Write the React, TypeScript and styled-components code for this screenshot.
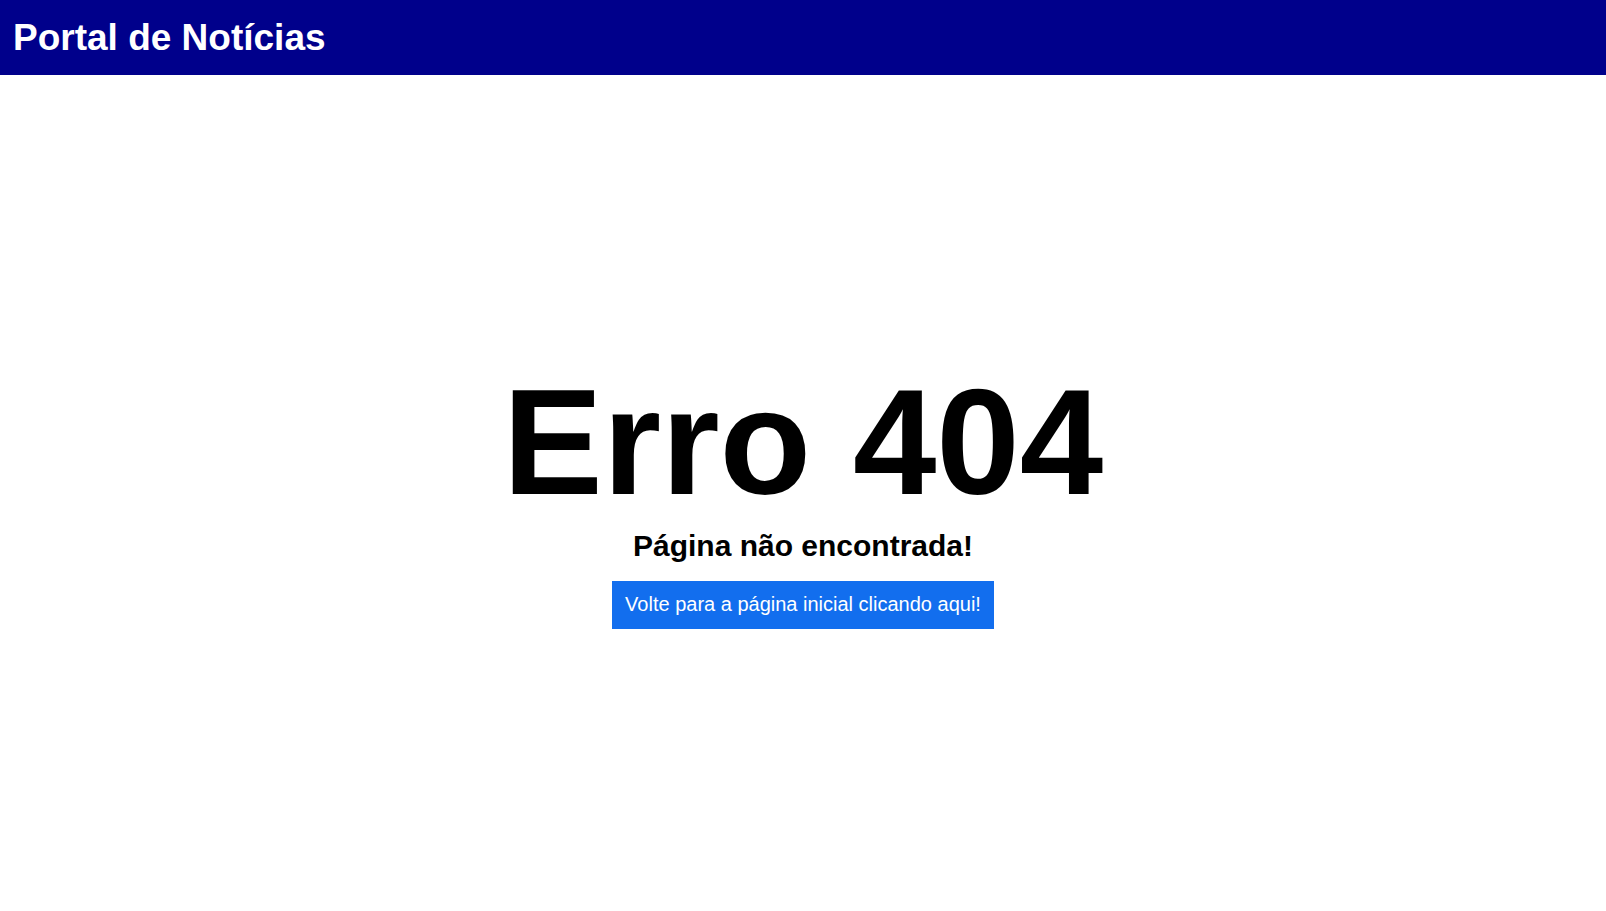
import React from "react";
import styled, { createGlobalStyle } from "styled-components";

const GlobalStyle = createGlobalStyle`
  * {
    margin: 0;
    padding: 0;
    box-sizing: border-box;
  }
  body {
    background: #ffffff;
    color: #000000;
    font-family: "Liberation Sans", Arial, Helvetica, sans-serif;
  }
`;

const Page = styled.div`
  display: flex;
  flex-direction: column;
  min-height: 100vh;
`;

const Header = styled.header`
  padding: 16px 13px;
  background: #00008b;
  color: #ffffff;
`;

const SiteTitle = styled.h1`
  font-size: 37px;
  line-height: 43px;
`;

const Main = styled.main`
  flex: 1;
  display: flex;
  flex-direction: column;
  align-items: center;
  justify-content: center;
  padding-bottom: 2px;
`;

const ErrorCode = styled.h2`
  font-size: 150px;
  line-height: 174px;
`;

const Message = styled.p`
  margin-bottom: 18px;
  font-size: 30px;
  font-weight: bold;
  line-height: 34px;
`;

const HomeLink = styled.a`
  padding: 11px 13px 13px;
  background: #126eee;
  color: #ffffff;
  font-size: 20px;
  line-height: 24px;
  text-decoration: none;
`;

export default function App() {
  return (
    <Page>
      <GlobalStyle />
      <Header>
        <SiteTitle>Portal de Notícias</SiteTitle>
      </Header>
      <Main>
        <ErrorCode>Erro 404</ErrorCode>
        <Message>Página não encontrada!</Message>
        <HomeLink href="/">Volte para a página inicial clicando aqui!</HomeLink>
      </Main>
    </Page>
  );
}
